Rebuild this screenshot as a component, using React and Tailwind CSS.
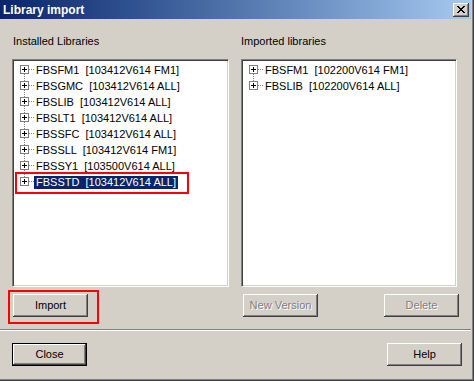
const installed = [
  'FBSFM1  [103412V614 FM1]',
  'FBSGMC  [103412V614 ALL]',
  'FBSLIB  [103412V614 ALL]',
  'FBSLT1  [103412V614 ALL]',
  'FBSSFC  [103412V614 ALL]',
  'FBSSLL  [103412V614 FM1]',
  'FBSSY1  [103500V614 ALL]',
  'FBSSTD  [103412V614 ALL]',
]

const imported = ['FBSFM1  [102200V614 FM1]', 'FBSLIB  [102200V614 ALL]']

const raised =
  'shadow-[inset_-1px_-1px_#404040,inset_1px_1px_#ffffff,inset_-2px_-2px_#808080,inset_2px_2px_#d4d0c8]'

function TreeRow({ label, first, last, selected }) {
  return (
    <div className="flex items-center h-4 pl-[4px]">
      <svg width="16" height="16" className="shrink-0" shapeRendering="crispEdges">
        {!first && <line x1="6.5" y1="0" x2="6.5" y2="3" stroke="#808080" strokeDasharray="1 1" />}
        {!last && <line x1="6.5" y1="12" x2="6.5" y2="16" stroke="#808080" strokeDasharray="1 1" />}
        <line x1="11" y1="7.5" x2="16" y2="7.5" stroke="#808080" strokeDasharray="1 1" />
        <rect x="2.5" y="3.5" width="8" height="8" fill="#fff" stroke="#808080" />
        <line x1="4" y1="7.5" x2="9" y2="7.5" stroke="#000" />
        <line x1="6.5" y1="5" x2="6.5" y2="10" stroke="#000" />
      </svg>
      <span
        className={
          'whitespace-pre px-[2px] h-[13px] leading-[13px] ' +
          (selected ? 'bg-[#0a246a] text-white' : 'text-black')
        }
      >
        {label}
      </span>
    </div>
  )
}

function ListBox({ items, selectedIndex, className, children }) {
  return (
    <div
      className={
        'relative h-[228px] bg-white border border-t-[#808080] border-l-[#808080] border-b-white border-r-white shadow-[inset_1px_1px_#404040,inset_-1px_-1px_#d4d0c8] ' +
        className
      }
    >
      <div className="pt-[2px] pl-[1px]">
        {items.map((it, i) => (
          <TreeRow
            key={it}
            label={it}
            first={i === 0}
            last={i === items.length - 1}
            selected={i === selectedIndex}
          />
        ))}
      </div>
      {children}
    </div>
  )
}

function Button({ children, disabled, isDefault, className = '' }) {
  if (isDefault) {
    return (
      <div className={'w-[75px] h-[23px] border border-black ' + className}>
        <button
          className={'w-full h-full bg-[#d4d0c8] text-[11px] text-black ' + raised}
        >
          {children}
        </button>
      </div>
    )
  }
  return (
    <button
      className={
        'w-[75px] h-[23px] bg-[#d4d0c8] text-[11px] ' +
        raised +
        ' ' +
        (disabled ? 'text-[#808080] [text-shadow:1px_1px_0_#ffffff] ' : 'text-black ') +
        className
      }
    >
      {children}
    </button>
  )
}

function CloseGlyph() {
  const rows = [
    [0, 1, 6, 7],
    [1, 2, 5, 6],
    [2, 3, 4, 5],
    [3, 4],
    [2, 3, 4, 5],
    [1, 2, 5, 6],
    [0, 1, 6, 7],
  ]
  return (
    <svg width="8" height="7" shapeRendering="crispEdges">
      {rows.map((cols, y) =>
        cols.map((x) => <rect key={y + '-' + x} x={x} y={y} width="1" height="1" fill="#000" />)
      )}
    </svg>
  )
}

export default function App() {
  return (
    <div className="relative w-[474px] h-[381px] overflow-hidden bg-[#d4d0c8] shadow-[inset_-1px_-1px_#404040,inset_-2px_-2px_#808080] font-['Liberation_Sans',Arial,sans-serif] text-[11px] text-black">
      {/* title bar */}
      <div className="mr-[3px] h-[19px] flex items-center justify-between bg-gradient-to-r from-[#0a246a] to-[#a6caf0] pl-[3px] pr-[2px]">
        <span className="font-bold text-white text-[12px] leading-none">Library import</span>
        <div className={'w-4 h-[14px] bg-[#d4d0c8] flex items-center justify-center ' + raised}>
          <CloseGlyph />
        </div>
      </div>

      <div className="flex pl-[12px] mt-[16px]">
        {/* installed */}
        <div className="w-[217px] flex flex-col">
          <div className="h-[13px] leading-[13px] pl-[1px] mb-[11px]">Installed Libraries</div>
          <ListBox items={installed} selectedIndex={7}>
            <div className="absolute left-[2px] top-[112px] w-[174px] h-[22px] border-2 border-[#ff0000]" />
          </ListBox>
          <div className="relative mt-[7px] ml-[1px] w-[75px]">
            <Button>Import</Button>
            <div className="absolute -left-[5px] -top-[4px] w-[91px] h-[34px] border-2 border-[#ff0000]" />
          </div>
        </div>

        {/* imported */}
        <div className="w-[218px] ml-[12px] flex flex-col">
          <div className="h-[13px] leading-[13px] mb-[11px]">Imported libraries</div>
          <ListBox items={imported} selectedIndex={-1} className="w-[216px]" />
          <div className="flex justify-between mt-[7px] pl-[2px]">
            <Button disabled>New Version</Button>
            <Button disabled>Delete</Button>
          </div>
        </div>
      </div>

      {/* separator */}
      <div className="mt-[12px] mr-[3px] border-t border-t-[#808080] border-b border-b-white" />

      <div className="flex justify-between px-[12px] mt-[12px]">
        <Button isDefault>Close</Button>
        <Button>Help</Button>
      </div>
    </div>
  )
}
